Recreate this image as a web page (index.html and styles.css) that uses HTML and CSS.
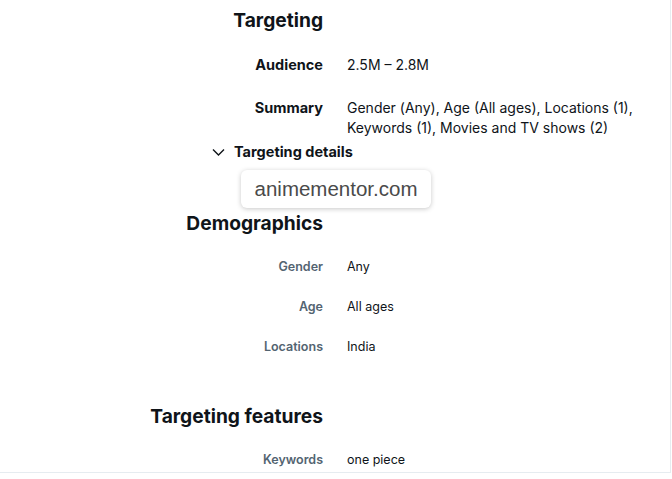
FILE: index.html
```html
<!DOCTYPE html>
<html lang="en">
<head>
    <meta charset="UTF-8">
    <title>Campaign targeting</title>
    <link rel="stylesheet" href="styles.css">
</head>
<body>
    <div class="panel">
        <h2 class="title">Targeting</h2>

        <div class="row main first">
            <div class="label">Audience</div>
            <div class="value">2.5M – 2.8M</div>
        </div>
        <div class="row main">
            <div class="label">Summary</div>
            <div class="value">Gender (Any), Age (All ages), Locations (1),<br>Keywords (1), Movies and TV shows (2)</div>
        </div>

        <div class="toggle">
            <svg width="13" height="12" viewBox="0 0 13 12"><path d="M1 3.5 L6.5 9 L12 3.5" fill="none" stroke="#0f1419" stroke-width="1.4"/></svg>
            <span>Targeting details</span>
        </div>

        <h3 class="sub">Demographics</h3>
        <div class="row small">
            <div class="label">Gender</div>
            <div class="value">Any</div>
        </div>
        <div class="row small">
            <div class="label">Age</div>
            <div class="value">All ages</div>
        </div>
        <div class="row small">
            <div class="label">Locations</div>
            <div class="value">India</div>
        </div>

        <h3 class="sub features">Targeting features</h3>
        <div class="row small">
            <div class="label">Keywords</div>
            <div class="value">one piece</div>
        </div>

        <div class="watermark">animementor.com</div>
    </div>
</body>
</html>
```

FILE: styles.css
```css
body {
    margin: 0;
    background: #fff;
    font-family: Inter, "Noto Sans", sans-serif;
    color: #0f1419;
}

.panel {
    position: relative;
    width: 671px;
    height: 473px;
    border-right: 1px solid #e6ecf0;
    border-bottom: 1px solid #e6ecf0;
    box-sizing: border-box;
    padding-top: 8px;
    overflow: hidden;
}

.title,
.sub {
    width: 323px;
    margin: 0;
    text-align: right;
    font-size: 19.2px;
    line-height: 24px;
    font-weight: 700;
}

.sub {
    margin-top: 49px;
}

.row {
    display: grid;
    grid-template-columns: 323px 1fr;
    column-gap: 24px;
}

.row .label {
    text-align: right;
    font-weight: 700;
}

.main {
    font-size: 14.5px;
    line-height: 20px;
    margin-top: 23px;
}

.main .value {
    font-size: 14px;
}

.main.first {
    margin-top: 23px;
}

.small {
    font-size: 12.5px;
    line-height: 16px;
    margin-top: 24px;
}

.small .label {
    color: #536471;
    font-weight: 600;
}

.toggle {
    display: flex;
    align-items: center;
    gap: 9px;
    margin: 4px 0 0 212px;
    font-size: 14.5px;
    line-height: 20px;
    font-weight: 700;
}

.watermark {
    position: absolute;
    left: 241px;
    top: 170px;
    width: 190px;
    height: 38px;
    box-sizing: border-box;
    border-radius: 6px;
    background: #fff;
    box-shadow: 0 1px 5px rgba(0, 0, 0, 0.22);
    text-align: center;
    font-family: "Liberation Sans", Arial, sans-serif;
    font-size: 20.5px;
    line-height: 38px;
    color: #4a4a4a;
}
```
